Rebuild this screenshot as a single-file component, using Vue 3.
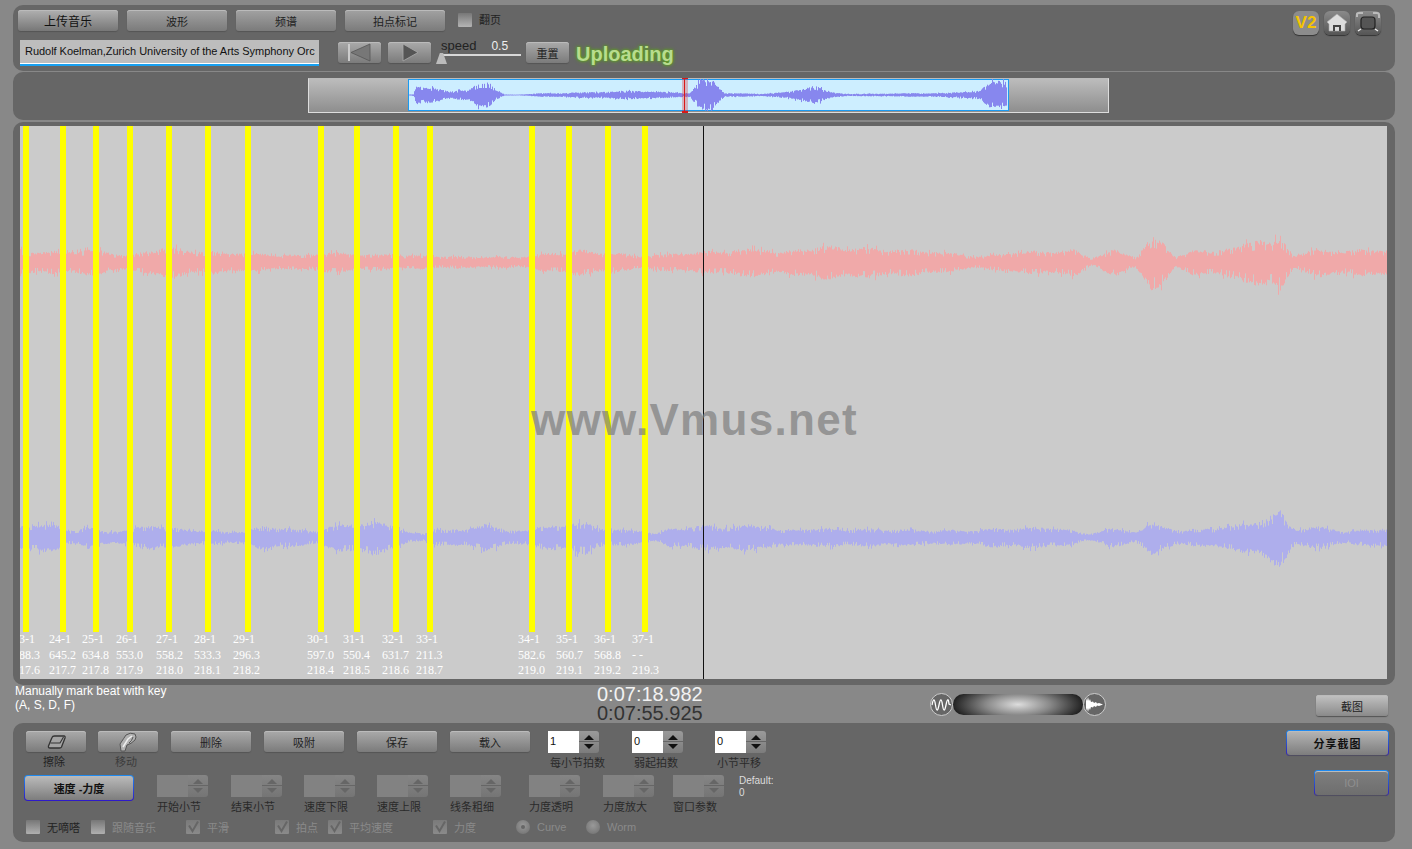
<script setup>
// seeded noise, so the waveforms stay the same between renders
function rng(seed) {
  let s = seed
  return () => {
    s = (s * 1664525 + 1013904223) % 4294967296
    return s / 4294967296
  }
}

function envAt(keys, x) {
  for (let i = 1; i < keys.length; i++) {
    if (x <= keys[i][0]) {
      const [x0, a0] = keys[i - 1]
      const [x1, a1] = keys[i]
      return a0 + ((a1 - a0) * (x - x0)) / (x1 - x0)
    }
  }
  return keys[keys.length - 1][1]
}

function jitter(rand) {
  const r = rand()
  if (r < 0.05) return 1.3
  if (r < 0.18) return 0.6
  return 0.8 + 0.3 * rand()
}

function wavePath(keys, from, to, center, seed, down = 1) {
  const rand = rng(seed)
  let d = ''
  for (let x = from; x < to; x++) {
    const a = envAt(keys, x) * (1 + 0.1 * Math.sin(x / 6.5))
    const up = a * jitter(rand)
    const lo = a * down * jitter(rand)
    d += `M${x - from + 0.5} ${(center - up).toFixed(1)}V${(center + lo).toFixed(1)}`
  }
  return d
}

const redKeys = [[20, 12], [40, 9], [100, 11], [125, 6], [150, 11], [165, 14], [185, 11], [205, 10], [250, 8], [300, 6], [320, 9], [370, 7], [420, 6], [470, 5], [520, 5], [575, 11], [640, 6], [700, 9], [767, 13], [778, 8], [803, 13], [834, 14], [879, 12], [923, 11], [981, 5], [1012, 9], [1075, 11], [1090, 4], [1115, 11], [1135, 5], [1151, 22], [1164, 18], [1175, 5], [1191, 10], [1236, 13], [1258, 23], [1271, 17], [1280, 22], [1294, 6], [1316, 12], [1338, 10], [1387, 12]]
const blueKeys = [[20, 10], [31, 13], [58, 10], [67, 6], [89, 9], [100, 6], [125, 6], [152, 12], [170, 8], [205, 6], [243, 5], [263, 10], [312, 6], [339, 11], [370, 14], [393, 11], [410, 4], [424, 3], [435, 8], [464, 6], [484, 13], [504, 6], [529, 7], [553, 11], [585, 13], [607, 7], [643, 6], [656, 3], [670, 8], [700, 10], [767, 11], [778, 6], [807, 8], [968, 6], [995, 8], [1057, 9], [1088, 3], [1111, 8], [1135, 5], [1151, 13], [1182, 6], [1231, 10], [1258, 15], [1280, 23], [1294, 8], [1325, 9], [1347, 5], [1387, 9]]
const miniKeys = [[410, 0.5], [414, 1], [417, 8], [440, 7], [450, 3], [470, 5], [480, 13], [490, 12], [497, 4], [505, 0.5], [520, 0.5], [540, 1.5], [560, 2], [600, 3], [640, 4], [655, 3], [690, 2], [700, 12], [712, 15], [725, 2], [760, 1], [790, 3], [815, 9], [828, 3], [850, 1], [900, 1.5], [950, 2], [980, 4], [990, 11], [1000, 13], [1008, 14]]

const redPath = wavePath(redKeys, 20, 1387, 136, 7, 1.1)
const bluePath = wavePath(blueKeys, 20, 1387, 411, 23, 1.15)
const miniPath = wavePath(miniKeys, 410, 1008, 16, 5)

const beatX = [23, 60, 93, 127, 166, 205, 245, 318, 354, 393, 427, 529, 566, 605, 642]

const beatLabels = [
  { x: 13, a: '23-1', b: '588.3', c: '217.6' },
  { x: 49, a: '24-1', b: '645.2', c: '217.7' },
  { x: 82, a: '25-1', b: '634.8', c: '217.8' },
  { x: 116, a: '26-1', b: '553.0', c: '217.9' },
  { x: 156, a: '27-1', b: '558.2', c: '218.0' },
  { x: 194, a: '28-1', b: '533.3', c: '218.1' },
  { x: 233, a: '29-1', b: '296.3', c: '218.2' },
  { x: 307, a: '30-1', b: '597.0', c: '218.4' },
  { x: 343, a: '31-1', b: '550.4', c: '218.5' },
  { x: 382, a: '32-1', b: '631.7', c: '218.6' },
  { x: 416, a: '33-1', b: '211.3', c: '218.7' },
  { x: 518, a: '34-1', b: '582.6', c: '219.0' },
  { x: 556, a: '35-1', b: '560.7', c: '219.1' },
  { x: 594, a: '36-1', b: '568.8', c: '219.2' },
  { x: 632, a: '37-1', b: '- -', c: '219.3' }
]

const topSpins = [
  { label: '每小节拍数', value: '1', gap: 18 },
  { label: '弱起拍数', value: '0', gap: 33 },
  { label: '小节平移', value: '0', gap: 32 }
]

const lowSpins = [
  { label: '开始小节', gap: 23 },
  { label: '结束小节', gap: 23 },
  { label: '速度下限', gap: 22 },
  { label: '速度上限', gap: 22 },
  { label: '线条粗细', gap: 22 },
  { label: '力度透明', gap: 28 },
  { label: '力度放大', gap: 23 },
  { label: '窗口参数', gap: 19 }
]

const options = [
  { label: '无嘀嗒', width: 65, on: true },
  { label: '跟随音乐', width: 95 },
  { label: '平滑', width: 89, checked: true },
  { label: '拍点', width: 53, checked: true },
  { label: '平均速度', width: 105, checked: true },
  { label: '力度', width: 83, checked: true },
  { label: 'Curve', width: 70, radio: true, dot: true },
  { label: 'Worm', width: 80, radio: true }
]
</script>

<template>
  <div class="page">
    <section class="panel top-panel">
      <div class="row-a">
        <button class="btn btn-upload">上传音乐</button>
        <button class="btn btn-tab">波形</button>
        <button class="btn btn-tab">频谱</button>
        <button class="btn btn-tab">拍点标记</button>
        <span class="box page-box"></span>
        <span class="page-label">翻页</span>
        <div class="tiles">
          <span class="tile tile-v2">V2</span>
          <span class="tile">
            <svg width="26" height="24" viewBox="0 0 26 24">
              <path d="M13 3 L23 11 L21 13 V20 H5 V13 L3 11 Z" fill="#ddd" stroke="#aaa" stroke-width=".6" />
              <path d="M9 20 V14 H17 V20 H15 V16 H11 V20 Z" fill="#444" />
            </svg>
          </span>
          <span class="tile">
            <svg width="26" height="24" viewBox="0 0 26 24">
              <rect x="6" y="6" width="14" height="12" rx="3" fill="#555" stroke="#222" stroke-width="1.2" />
              <path d="M2 6 V3 Q2 2 4 2 H8 M18 2 H22 Q24 2 24 4 V7" fill="none" stroke="#bbb" stroke-width="2" />
              <path d="M3 20 L6 18 M23 20 L20 18" stroke="#eee" stroke-width="1.4" />
            </svg>
          </span>
        </div>
      </div>
      <div class="row-b">
        <div class="title-box">Rudolf Koelman,Zurich University of the Arts Symphony Orc</div>
        <button class="btn btn-nav">
          <svg width="30" height="19" viewBox="0 0 30 19">
            <rect x="3" y="1" width="2" height="17" fill="#ccc" />
            <path d="M25 1 L6 9.500 L25 18 Z" fill="#777" stroke="#555" stroke-width=".8" />
          </svg>
        </button>
        <button class="btn btn-nav">
          <svg width="24" height="19" viewBox="0 0 24 19">
            <path d="M5 1 L20 9.500 L5 18 Z" fill="#555" stroke="#aaa" stroke-width=".8" />
          </svg>
        </button>
        <div class="speed">
          <div class="speed-text"><span>speed</span><span class="speed-val">0.5</span></div>
          <div class="speed-track"><span class="speed-thumb"></span></div>
        </div>
        <button class="btn btn-reset">重置</button>
        <span class="uploading">Uploading</span>
      </div>
    </section>

    <section class="panel mini-panel">
      <div class="mini">
        <div class="mini-sel">
          <svg class="mini-wave" width="598" height="32" viewBox="0 0 598 32">
            <path :d="miniPath" stroke="#8787ee" stroke-width="1" fill="none" />
          </svg>
        </div>
        <span class="mini-head"></span>
      </div>
    </section>

    <section class="panel canvas-panel">
      <div class="canvas">
        <svg class="waves" width="1367" height="553" viewBox="0 0 1367 553">
          <path :d="redPath" stroke="#f0a9a9" stroke-width="1" fill="none" />
          <path :d="bluePath" stroke="#aeaeec" stroke-width="1" fill="none" />
        </svg>
        <span
          v-for="x in beatX"
          :key="x"
          class="beat"
          :style="{ left: `${x - 20}px` }"
        ></span>
        <div
          v-for="l in beatLabels"
          :key="l.a"
          class="beat-label"
          :style="{ left: `${l.x - 20}px` }"
        >
          <div>{{ l.a }}</div>
          <div>{{ l.b }}</div>
          <div>{{ l.c }}</div>
        </div>
        <span class="cursor"></span>
        <div class="watermark">www.Vmus.net</div>
      </div>
    </section>

    <div class="status">
      <div class="hint">Manually mark beat with key<br />(A, S, D, F)</div>
      <div class="clock">
        <div class="clock-now">0:07:18.982</div>
        <div class="clock-total">0:07:55.925</div>
      </div>
      <div class="zoomer">
        <span class="round">
          <svg width="23" height="23" viewBox="0 0 23 23">
            <path d="M2 12 Q4 2 5.500 12 T9 12 T12.500 12 T16 12 T19 11 L21 12" fill="none" stroke="#fff" stroke-width="1.300" />
          </svg>
        </span>
        <span class="pill"></span>
        <span class="round">
          <svg width="23" height="23" viewBox="0 0 23 23">
            <path d="M3 5 L4 8 L5 4 L6 8 L7 6 L8 9 L10 8.500 L11 10 L13 9 L14 10.500 L16 10 L20 11.500 L16 13 L14 12.500 L13 14 L11 13 L10 14.500 L8 14 L7 17 L6 15 L5 19 L4 15 L3 18 Z" fill="#fff" />
          </svg>
        </span>
      </div>
      <button class="btn btn-shot">截图</button>
    </div>

    <section class="panel tools">
      <div class="tools-left">
        <div class="tools-row row-1">
          <div class="tool">
            <button class="btn btn-icon">
              <svg width="22" height="16" viewBox="0 0 22 16">
                <path d="M9.500 2 H19 Q20.500 2 20 4 L16.500 13 Q16 14 14.500 14 H5 Q3 14 3.500 12 L7 3.500 Q7.500 2 9.500 2 Z" fill="#a4a4a4" stroke="#333" stroke-width="1.300" />
                <path d="M5.500 9 H15 L18.500 3" fill="none" stroke="#333" stroke-width="1.100" />
              </svg>
            </button>
            <span class="tool-label">擦除</span>
          </div>
          <div class="tool tool-move">
            <button class="btn btn-icon">
              <svg width="20" height="20" viewBox="0 0 20 20">
                <path d="M3 19 L2 12 Q6 6 8 3 Q12 0 17 2 Q19 5 17 8 Q13 12 9 13 L7 19 Z" fill="#b2b2b2" stroke="#555" stroke-width="1" />
                <path d="M5 15 L10 7 L14 4" fill="none" stroke="#eee" stroke-width="1.500" />
                <path d="M11 11 Q14 9 15 5" fill="none" stroke="#555" stroke-width="1" />
              </svg>
            </button>
            <span class="tool-label muted">移动</span>
          </div>
          <button class="btn btn-wide first-wide">删除</button>
          <button class="btn btn-wide">吸附</button>
          <button class="btn btn-wide">保存</button>
          <button class="btn btn-wide">载入</button>
          <div
            v-for="s in topSpins"
            :key="s.label"
            class="spin-cell"
            :style="{ marginLeft: `${s.gap}px` }"
          >
            <div class="spin">
              <span class="spin-input">{{ s.value }}</span>
              <span class="stepper"><i class="up"></i><i class="down"></i></span>
            </div>
            <span class="spin-label pad">{{ s.label }}</span>
          </div>
        </div>
        <div class="tools-row row-2">
          <button class="btn btn-mode">速度 -力度</button>
          <div
            v-for="s in lowSpins"
            :key="s.label"
            class="spin-cell"
            :style="{ marginLeft: `${s.gap}px` }"
          >
            <div class="spin off">
              <span class="spin-input"></span>
              <span class="stepper"><i class="up"></i><i class="down"></i></span>
            </div>
            <span class="spin-label">{{ s.label }}</span>
          </div>
          <div class="default-note">Default:<br />0</div>
        </div>
        <div class="tools-row row-3">
          <label
            v-for="o in options"
            :key="o.label"
            class="opt"
            :class="{ on: o.on }"
            :style="{ width: `${o.width}px` }"
          >
            <span v-if="o.radio" class="radio"><i v-if="o.dot"></i></span>
            <span v-else class="box">
              <svg v-if="o.checked" width="14" height="14" viewBox="0 0 14 14">
                <path d="M3 5.500 L6.500 11 L12 1.500" fill="none" stroke="#666" stroke-width="2" />
              </svg>
            </span>
            <span>{{ o.label }}</span>
          </label>
        </div>
      </div>
      <div class="tools-right">
        <div class="focus"><button class="btn btn-share">分享截图</button></div>
        <div class="focus"><button class="btn btn-ioi">IOI</button></div>
      </div>
    </section>
  </div>
</template>

<style>
html, body {
  margin: 0;
  background: #888;
}
</style>

<style scoped>
.page {
  width: 1412px;
  height: 849px;
  box-sizing: border-box;
  padding: 5px 17px 0 13px;
  background: #888;
  overflow: hidden;
  font-family: "Liberation Sans", "Noto Sans CJK SC", sans-serif;
  color: #222;
}
.panel {
  background: #666;
  border-radius: 10px;
  box-sizing: border-box;
}
.btn {
  display: flex;
  align-items: center;
  justify-content: center;
  box-sizing: border-box;
  padding: 0;
  border: 0;
  border-radius: 3px;
  background: linear-gradient(#aaa, #7b7b7b);
  box-shadow: inset 0 1px 0 #bbb, 0 1px 1px #555;
  font: 11px "Liberation Sans", "Noto Sans CJK SC", sans-serif;
  color: #222;
}

/* top bar */
.top-panel {
  height: 66px;
  padding: 5px 13px 0 5px;
}
.row-a {
  display: flex;
  align-items: flex-start;
  gap: 9px;
  height: 30px;
}
.btn-upload {
  width: 100px;
  height: 21px;
  font-size: 12px;
  color: #111;
  background: linear-gradient(#b0b0b0, #777);
}
.btn-tab {
  width: 100px;
  height: 21px;
  background: linear-gradient(#a2a2a2, #7b7b7b);
}
.box {
  display: inline-block;
  flex: none;
  width: 14px;
  height: 14px;
  background: linear-gradient(#777, #b5b5b5);
  border-radius: 1px;
}
.page-box {
  margin: 3px 0 0 4px;
}
.page-label {
  font-size: 11px;
  line-height: 20px;
  margin-left: -2px;
}
.tiles {
  display: flex;
  gap: 5px;
  margin: 1px 0 0 auto;
  margin-right: 1px;
}
.tile {
  display: block;
  width: 26px;
  height: 24px;
  border-radius: 6px;
  background: linear-gradient(#8a8a8a, #555);
  box-shadow: 0 1px 1px #333;
}
.tile-v2 {
  background: #8c8c8c;
  color: #f5c400;
  font: bold 17px/24px "Liberation Sans", sans-serif;
  text-align: center;
}
.row-b {
  display: flex;
  align-items: flex-start;
  padding-left: 2px;
}
.title-box {
  width: 299px;
  height: 26px;
  box-sizing: border-box;
  background: #bdbdbd;
  border-bottom: 2px solid #18a0f0;
  box-shadow: inset 0 -1px 0 #fff;
  font-size: 11px;
  line-height: 22px;
  letter-spacing: -0.035px;
  padding-left: 5px;
  white-space: nowrap;
  overflow: hidden;
  color: #111;
}
.btn-nav {
  width: 43px;
  height: 21px;
  margin: 2px 0 0 7px;
}
.title-box + .btn-nav {
  margin-left: 19px;
}
.speed {
  position: relative;
  width: 80px;
  margin-left: 10px;
  height: 26px;
}
.speed-text {
  display: flex;
  font-size: 13px;
  line-height: 12px;
  color: #222;
}
.speed-val {
  margin-left: 15px;
  color: #eee;
  font-size: 12px;
}
.speed-track {
  height: 2px;
  margin-top: 2px;
  background: #d8d8d8;
}
.speed-thumb {
  position: absolute;
  left: -5px;
  top: 13px;
  width: 11px;
  height: 11px;
  background: #bbb;
  clip-path: polygon(35% 0, 65% 0, 100% 100%, 0 100%);
}
.btn-reset {
  width: 43px;
  height: 21px;
  margin: 2px 0 0 5px;
}
.uploading {
  margin: 3px 0 0 7px;
  font-size: 20px;
  line-height: 22px;
  font-weight: bold;
  color: #b8dc8e;
  text-shadow: 0 0 4px #5f9a28, 0 0 3px #5f9a28, 0 0 2px #5f9a28;
}

/* overview */
.mini-panel {
  height: 48px;
  margin-top: 1px;
  padding: 6px 0 0 295px;
}
.mini {
  position: relative;
  width: 801px;
  height: 35px;
  box-sizing: border-box;
  border: 1px solid #ddd;
  border-top-color: #bbb;
  background: linear-gradient(#bcbcbc, #8e8e8e);
}
.mini-sel {
  position: absolute;
  left: 99px;
  top: 0;
  width: 601px;
  height: 32px;
  box-sizing: border-box;
  background: #cdeeff;
  border: 1px solid #1c9af0;
}
.mini-wave {
  position: absolute;
  left: 0;
  top: -1px;
}
.mini-head {
  position: absolute;
  left: 373px;
  top: -1px;
  width: 6px;
  height: 35px;
  background: linear-gradient(to right, rgba(225, 40, 40, 0.3) 2.500px, #d81818 2.500px, #d81818 3.500px, rgba(225, 40, 40, 0.3) 3.500px);
  border-top: 1px solid #d81818;
  border-bottom: 2px solid #d81818;
  box-sizing: border-box;
}

/* main canvas */
.canvas-panel {
  height: 563px;
  margin-top: 2px;
  padding: 4px 8px 0 7px;
}
.canvas {
  position: relative;
  width: 1367px;
  height: 553px;
  background: #cbcbcb;
  overflow: hidden;
}
.waves {
  position: absolute;
  left: 0;
  top: 0;
}
.beat {
  position: absolute;
  top: 0;
  width: 6px;
  height: 506px;
  background: #ffff00;
}
.beat-label {
  position: absolute;
  top: 506px;
  font: 12px/15.500px "Liberation Serif", serif;
  color: #fff;
  white-space: nowrap;
}
.cursor {
  position: absolute;
  left: 683px;
  top: 0;
  width: 1px;
  height: 553px;
  background: #111;
}
.watermark {
  position: absolute;
  left: 511px;
  top: 267px;
  font: bold 44px/54px "Liberation Sans", sans-serif;
  letter-spacing: 1.300px;
  color: rgba(125, 125, 125, 0.7);
  white-space: nowrap;
}

/* status line */
.status {
  display: flex;
  height: 38px;
  padding-left: 2px;
  align-items: flex-start;
}
.hint {
  width: 582px;
  margin-top: -1px;
  font-size: 12px;
  line-height: 14px;
  color: #fff;
}
.clock {
  width: 333px;
  font-size: 20px;
  line-height: 19px;
}
.clock-now {
  color: #f2f2f2;
}
.clock-total {
  color: #333;
}
.zoomer {
  display: flex;
  align-items: center;
  margin-top: 8px;
}
.round {
  display: block;
  width: 23px;
  height: 23px;
  box-sizing: border-box;
  border: 1px solid #ccc;
  border-radius: 50%;
  background: #666;
  overflow: hidden;
}
.round svg {
  display: block;
  margin: -1px;
}
.pill {
  display: block;
  width: 130px;
  height: 21px;
  border-radius: 11px;
  background: radial-gradient(ellipse 50% 100% at center, #ddd 0, #888 50%, #222 100%);
}
.btn-shot {
  width: 72px;
  height: 21px;
  margin: 10px 0 0 210px;
  background: linear-gradient(#c2c2c2, #8a8a8a);
}

/* bottom tools */
.tools {
  display: flex;
  justify-content: space-between;
  height: 119px;
  padding: 8px 6px 0 0;
}
.tools-row {
  display: flex;
  align-items: flex-start;
}
.row-1 {
  height: 44px;
  padding-left: 13px;
}
.row-2 {
  height: 45px;
  padding-left: 11px;
}
.row-3 {
  padding-left: 13px;
}
.tool {
  width: 60px;
  display: flex;
  flex-direction: column;
  align-items: center;
}
.tool-move {
  margin-left: 12px;
}
.tool-label {
  font-size: 11px;
  line-height: 14px;
  margin-top: 3px;
  margin-right: 4px;
  color: #222;
}
.tool-label.muted {
  color: #3c3c3c;
}
.btn-icon {
  width: 60px;
  height: 21px;
}
.btn-wide {
  width: 80px;
  height: 21px;
  margin-left: 13px;
}
.spin-cell {
  flex: none;
  width: 51px;
  white-space: nowrap;
}
.spin {
  display: flex;
  height: 22px;
}
.spin-input {
  display: block;
  width: 31px;
  height: 22px;
  box-sizing: border-box;
  background: #fff;
  font-size: 11px;
  line-height: 21px;
  padding-left: 2px;
  color: #111;
}
.stepper {
  position: relative;
  width: 20px;
  height: 22px;
  background: linear-gradient(#9a9a9a, #7c7c7c);
  border-radius: 0 3px 3px 0;
}
.stepper::after {
  content: "";
  position: absolute;
  left: 0;
  right: 0;
  top: 10px;
  height: 1px;
  background: #666;
}
.stepper i {
  position: absolute;
  left: 5px;
  width: 0;
  height: 0;
  border-left: 5px solid transparent;
  border-right: 5px solid transparent;
}
.stepper .up {
  top: 4px;
  border-bottom: 5px solid #111;
}
.stepper .down {
  top: 13px;
  border-top: 5px solid #111;
}
.spin.off .spin-input {
  background: #828282;
}
.spin.off .stepper {
  background: linear-gradient(#858585, #757575);
}
.spin.off .stepper .up {
  border-bottom-color: #666;
}
.spin.off .stepper .down {
  border-top-color: #666;
}
.spin-label {
  display: block;
  font-size: 11px;
  line-height: 14px;
  margin-top: 3px;
  color: #2a2a2a;
}
.spin-label.pad {
  padding-left: 2px;
}
.focus {
  padding: 1px;
  border-radius: 4px;
  background: linear-gradient(#1f8cf0, #2e18c8);
}
.btn-mode {
  width: 110px;
  height: 26px;
  border: 1px solid transparent;
  border-radius: 4px;
  background: linear-gradient(#bbb, #7d7d7d) padding-box, linear-gradient(#1f8cf0, #2e18c8) border-box;
  box-shadow: none;
  font-weight: bold;
  color: #111;
}
.default-note {
  margin-left: 15px;
  font-size: 10px;
  line-height: 12px;
  color: #ddd;
  white-space: nowrap;
}
.opt {
  display: flex;
  flex: none;
  align-items: center;
  gap: 7px;
  height: 14px;
  font-size: 11px;
  color: #8a8a8a;
}
.opt.on {
  color: #222;
}
.opt .box {
  background: linear-gradient(#777, #b0b0b0);
}
.opt .box svg {
  display: block;
}
.opt:nth-child(n + 3) .box {
  background: linear-gradient(#7a7a7a, #8a8a8a);
}
.radio {
  position: relative;
  display: block;
  flex: none;
  width: 14px;
  height: 14px;
  border-radius: 50%;
  background: radial-gradient(circle at 50% 40%, #999, #6e6e6e);
}
.radio i {
  position: absolute;
  left: 5px;
  top: 5px;
  width: 4px;
  height: 4px;
  border-radius: 50%;
  background: #666;
}
.tools-right {
  display: flex;
  flex-direction: column;
  align-items: flex-end;
  gap: 14px;
  margin-top: -1px;
}
.btn-share {
  width: 101px;
  height: 24px;
  background: linear-gradient(#b5b5b5, #7d7d7d);
  font-weight: bold;
  letter-spacing: 1px;
  color: #111;
}
.btn-ioi {
  width: 73px;
  height: 24px;
  background: linear-gradient(#7e7e7e, #6e6e6e);
  color: #8f8f8f;
}
</style>
